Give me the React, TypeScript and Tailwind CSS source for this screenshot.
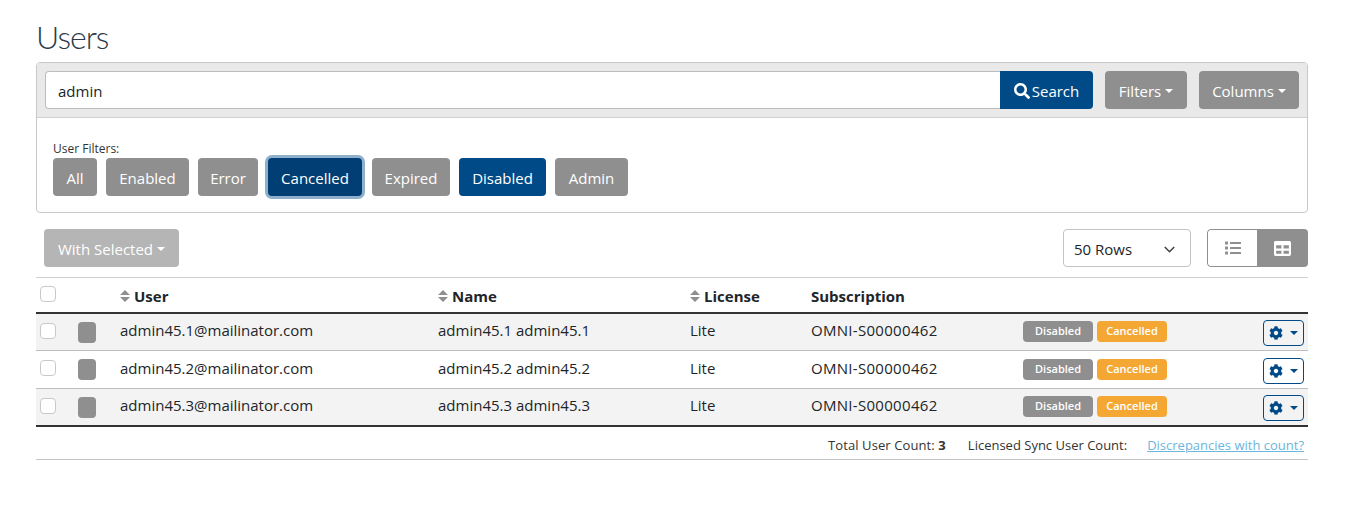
import { FaCog, FaList, FaSearch, FaTable } from 'react-icons/fa';

const filters = [
  { label: 'All', cls: 'w-[44px] bg-[#8f8f8f]' },
  { label: 'Enabled', cls: 'w-[83px] bg-[#8f8f8f]' },
  { label: 'Error', cls: 'w-[60px] bg-[#8f8f8f]' },
  { label: 'Cancelled', cls: 'ml-[1px] w-[94px] bg-[#003e73] ring-[3px] ring-[#8fb0cc]' },
  { label: 'Expired', cls: 'ml-[1px] w-[78px] bg-[#8f8f8f]' },
  { label: 'Disabled', cls: 'w-[87px] bg-[#004b87]' },
  { label: 'Admin', cls: 'w-[73px] bg-[#8f8f8f]' },
];

const users = [
  { id: '45.1', rowH: 'h-[36px] bg-[#f3f3f3]' },
  { id: '45.2', rowH: 'h-[38px] bg-white' },
  { id: '45.3', rowH: 'h-[37px] bg-[#f3f3f3]' },
];

const Caret = () => (
  <span className="inline-block w-0 h-0 border-x-[4.5px] border-x-transparent border-t-[4.5px] border-t-current" />
);

const Check = () => <span className="block w-4 h-4 bg-white border border-[#c9c9c9] rounded-[4px]" />;

const SortIcon = () => (
  <svg width="10" height="12" viewBox="0 0 10 12" fill="#8f8f8f">
    <path d="M5 0l5 5H0zM5 12L0 7h10z" />
  </svg>
);

const gridCols = 'grid grid-cols-[42px_42px_318px_252px_121px_212px_1fr] items-center';

const App = () => {
  return (
    <div className="w-[1353px] h-[524px] bg-white overflow-hidden px-[36px] text-[#212529] font-['Open_Sans',sans-serif]">
      <h1 className="h-[62px] pt-[15px] text-[32px] leading-[43px] font-light tracking-[-1px] text-[#2c3b47] font-['Lato',sans-serif]">
        Users
      </h1>

      <div className="w-[1272px] h-[151px] border border-[#c8c8c8] rounded-[4px] overflow-hidden">
        <div className="h-[55px] bg-[#e9e9e9] border-b border-[#cfcfcf] flex pl-[8px] pt-[8px]">
          <div className="w-[955px] h-[38px] bg-white border border-[#bdbdbd] border-r-0 rounded-l-[4px] pl-[12px] pt-[2px] flex items-center text-[15px]">
            admin
          </div>
          <button className="w-[93px] h-[38px] bg-[#004b87] text-white text-[15px] pt-[2px] rounded-r-[4px] flex items-center justify-center gap-[2px]">
            <FaSearch className="w-[16px] h-[16px]" />
            Search
          </button>
          <button className="ml-[12px] w-[82px] h-[38px] bg-[#8f8f8f] text-white text-[15px] pt-[2px] rounded-[4px] flex items-center justify-center gap-[4px]">
            Filters
            <Caret />
          </button>
          <button className="ml-[12px] w-[100px] h-[38px] bg-[#8f8f8f] text-white text-[15px] pt-[2px] rounded-[4px] flex items-center justify-center gap-[4px]">
            Columns
            <Caret />
          </button>
        </div>
        <div className="pl-[16px] pt-[21px]">
          <div className="h-[19px] text-[12px] leading-[19px] text-[#333]">User Filters:</div>
          <div className="flex gap-[9px]">
            {filters.map((f) => (
              <button key={f.label} className={`h-[38px] pt-[2px] rounded-[4px] text-white text-[15px] ${f.cls}`}>
                {f.label}
              </button>
            ))}
          </div>
        </div>
      </div>

      <div className="h-[64px] w-[1272px] pt-[16px] pl-[8px] flex">
        <button className="w-[135px] h-[38px] bg-[#b5b5b5] text-white text-[15px] pt-[2px] rounded-[4px] flex items-center justify-center gap-[4px]">
          With Selected
          <Caret />
        </button>
        <div className="ml-auto w-[128px] h-[38px] border border-[#c4c4c4] rounded-[4px] flex items-center justify-between pl-[10px] pr-[15px] pt-[2px] text-[15px]">
          50 Rows
          <svg width="11" height="7" viewBox="0 0 11 7" fill="none" stroke="#444" strokeWidth="1.6">
            <path d="M.8 1l4.7 4.7L10.2 1" />
          </svg>
        </div>
        <div className="ml-[16px] w-[101px] h-[38px] flex rounded-[4px] overflow-hidden">
          <div className="w-[50px] border border-r-0 border-[#8f8f8f] rounded-l-[4px] flex items-center justify-center text-[#8f8f8f]">
            <FaList className="w-[16px] h-[16px]" />
          </div>
          <div className="flex-1 bg-[#8f8f8f] flex items-center justify-center text-white">
            <FaTable className="w-[17px] h-[17px]" />
          </div>
        </div>
      </div>

      <div className="w-[1272px]">
        <div className={`${gridCols} h-[35px] border-t border-[#cfcfcf] text-[15px] font-bold`}>
          <div className="pl-[4px] -mt-[3px]">
            <Check />
          </div>
          <div />
          <div className="flex items-center gap-[4px] pt-[2px]">
            <SortIcon />
            User
          </div>
          <div className="flex items-center gap-[4px] pt-[2px]">
            <SortIcon />
            Name
          </div>
          <div className="flex items-center gap-[4px] pt-[2px]">
            <SortIcon />
            License
          </div>
          <div className="pt-[2px]">Subscription</div>
          <div />
        </div>
        <div className="border-t-2 border-b-2 border-[#333]">
          {users.map((u, i) => (
            <div
              key={u.id}
              className={`${gridCols} ${u.rowH} text-[15px] ${i > 0 ? 'border-t border-[#bdbdbd]' : ''}`}
            >
              <div className="pl-[4px] -mt-[3px]">
                <Check />
              </div>
              <div>
                <span className="block w-[18px] h-[21px] bg-[#8f8f8f] rounded-[4px]" />
              </div>
              <div className="-mt-[3px]">{`admin${u.id}@mailinator.com`}</div>
              <div className="-mt-[3px]">{`admin${u.id} admin${u.id}`}</div>
              <div className="-mt-[3px]">Lite</div>
              <div className="-mt-[3px] tracking-[0.3px]">OMNI-S00000462</div>
              <div className="flex items-center">
                <span className="-mt-[1px] w-[70px] h-[21px] rounded-[4px] bg-[#8f8f8f] text-white text-[11px] font-semibold flex items-center justify-center">
                  Disabled
                </span>
                <span className="-mt-[1px] ml-[4px] w-[70px] h-[21px] rounded-[4px] bg-[#f5a733] text-white text-[11px] font-semibold flex items-center justify-center">
                  Cancelled
                </span>
                <button className="ml-auto mr-[4px] w-[41px] h-[26px] mt-[2px] border border-[#004b87] rounded-[4px] text-[#004b87] flex items-center justify-center gap-[7px]">
                  <FaCog className="w-[14px] h-[14px]" />
                  <Caret />
                </button>
              </div>
            </div>
          ))}
        </div>
        <div className="h-[33px] border-b border-[#c4c4c4] flex items-center justify-end pr-[4px] pt-[6px] text-[13px] text-[#333]">
          <span className="tracking-[0.1px]">
            Total User Count: <b>3</b>
          </span>
          <span className="ml-[22px]">Licensed Sync User Count:</span>
          <a className="ml-[20px] text-[#6db5dc] underline">Discrepancies with count?</a>
        </div>
      </div>
    </div>
  );
};

export default App;
